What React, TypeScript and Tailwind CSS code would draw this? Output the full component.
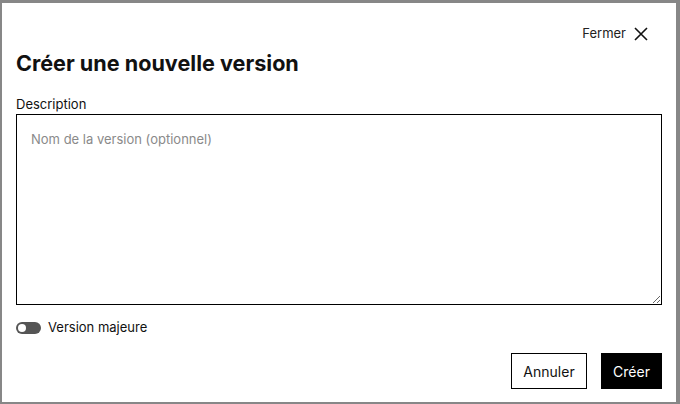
import React from "react";

export default function App() {
  return (
    <div
      className="w-[680px] h-[404px] bg-[#878787] pt-[3px] pl-[2px] overflow-hidden"
      style={{ fontFamily: "Inter, 'Noto Sans', sans-serif" }}
    >
      <div className="w-[674px] h-[399px] bg-white px-[14px] flex flex-col text-[#111]">
        <div className="flex justify-end items-center h-[20px] mt-[21px] gap-[7px] pr-[13px]">
          <span className="text-[13px] text-[#222]">Fermer</span>
          <svg width="16" height="16" viewBox="0 0 16 16" fill="none" stroke="#111" strokeWidth="1.6">
            <path d="M2 2 L14 14 M14 2 L2 14" />
          </svg>
        </div>
        <h1 className="text-[21.6px] font-bold leading-[28px] mt-[5px] text-[#111]">Créer une nouvelle version</h1>
        <label className="text-[13px] leading-[16px] mt-[19px] text-[#111]">Description</label>
        <textarea
          className="mt-[2px] w-[646px] h-[191px] border border-black px-[14px] pt-[15px] text-[13px] leading-[18px] placeholder:text-[#8a8a8a] outline-none resize-y"
          placeholder="Nom de la version (optionnel)"
        />
        <div className="flex items-center gap-[7px] mt-[16px] h-[14px]">
          <div className="w-[25px] h-[12px] rounded-full bg-[#555] flex items-center pl-[2px]">
            <div className="w-[8px] h-[8px] rounded-full bg-white" />
          </div>
          <span className="text-[13px] text-[#111]">Version majeure</span>
        </div>
        <div className="flex justify-end gap-[14px] mt-[18px]">
          <button className="h-[36px] w-[76px] border border-black bg-white text-[14px] text-[#111]">Annuler</button>
          <button className="h-[36px] w-[61px] bg-black text-white text-[14px]">Créer</button>
        </div>
      </div>
    </div>
  );
}
